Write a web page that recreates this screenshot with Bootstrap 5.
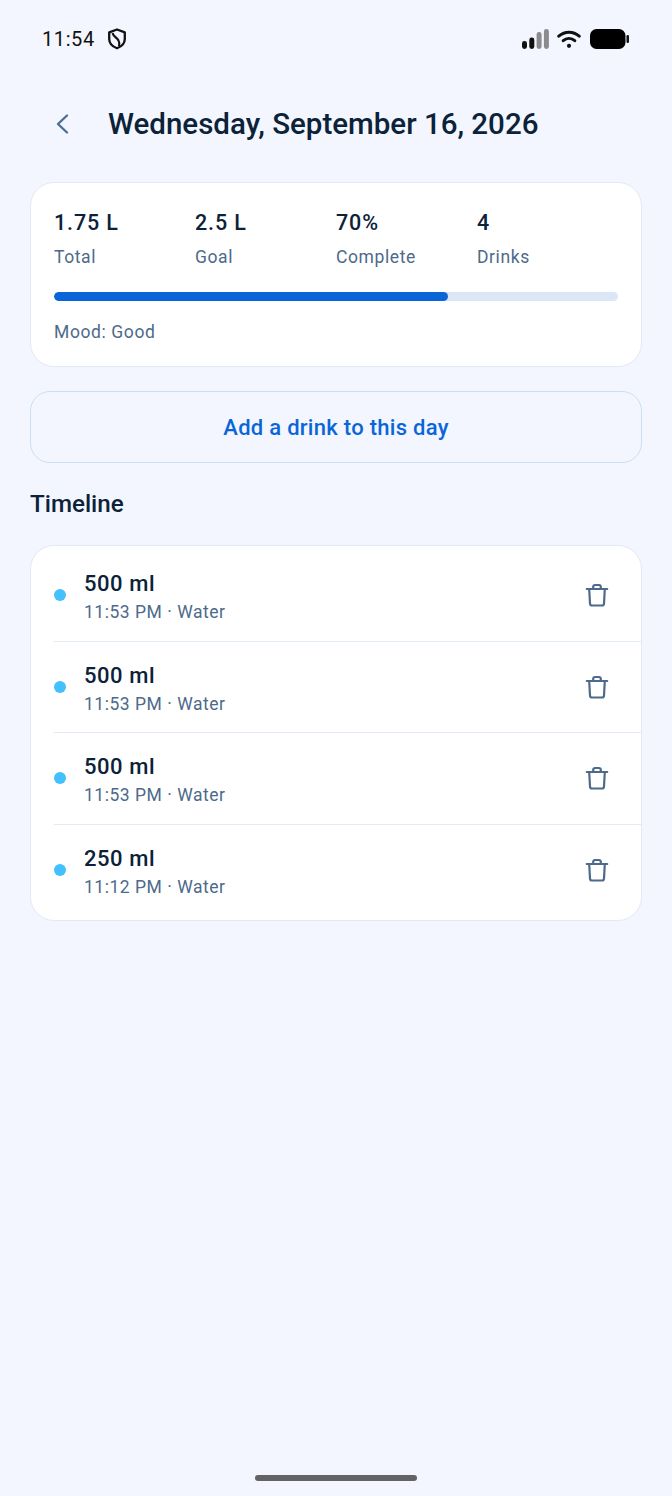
<!DOCTYPE html>
<html lang="en">
<head>
<meta charset="utf-8">
<title>Day detail</title>
<link href="https://cdn.jsdelivr.net/npm/bootstrap@5.3.0/dist/css/bootstrap.min.css" rel="stylesheet">
<style>
html,body{margin:0;background:#f3f6fe;}
body{font-family:Roboto,"Liberation Sans",sans-serif;color:#0b2239;}
.screen{height:1496px;width:672px;overflow:hidden;position:relative;background:#f3f6fe;}
.statusbar{height:78px;padding:0 42px 0 42px;}
.statusbar .clock{font-size:20px;line-height:24px;color:#111;letter-spacing:.6px;margin-right:12px;}
.headbar{height:56px;margin-top:18px;padding-left:52px;gap:32px;margin-bottom:30px;}
.headbar h1{font-size:29.5px;font-weight:500;letter-spacing:0;margin:0;color:#0b2239;line-height:36px;}
.backbtn{width:24px;height:24px;padding:0;border:0;background:none;line-height:0;}
.panel{background:#fff;border:1px solid #e2eaf6;border-radius:24px;margin:0 30px;}
.summary{padding:24px 23px 0;height:185px;}
.stat-col{width:141px;flex:none;}
.stat-val{font-size:21.5px;font-weight:480;line-height:32px;letter-spacing:.85px;color:#0b2239;}
.stat-lab{font-size:17.5px;line-height:24px;letter-spacing:.6px;color:#4d6a8a;margin-top:6px;}
.meter{height:9px;background:#dbe6f6;border-radius:5px;margin-top:23px;}
.meter .progress-bar{background:#0a66d8;border-radius:5px;}
.moodline{font-size:17.5px;line-height:24px;letter-spacing:.6px;color:#4d6a8a;margin-top:19px;}
.addbtn{display:block;width:calc(100% - 60px);margin:24px 30px 0;height:72px;border:1px solid #cbdff3;border-radius:20px;background:transparent;color:#0a66d8;font-size:22px;font-weight:500;letter-spacing:.28px;}
.addbtn:hover{background:transparent;color:#0a66d8;border-color:#cbdff3;}
.secthead{font-size:24.2px;font-weight:500;line-height:32px;margin:25px 30px 25px;color:#0b2239;}
.entries{padding:4px 0;height:376px;}
.entry{margin-left:23px;height:91.5px;border-bottom:1px solid #e2eaf6;padding-right:32px;}
.entry:last-child{border-bottom:0;}
.dot-mark{width:12px;height:12px;border-radius:50%;background:#45c0ff;flex:none;margin-right:18px;}
.entry-text{padding-top:4px;}
.entry-amt{font-size:22px;font-weight:480;line-height:28px;letter-spacing:.55px;color:#0b2239;}
.entry-sub{font-size:17.5px;line-height:24px;letter-spacing:.52px;color:#4d6a8a;margin-top:2px;}
.trashbtn{width:24px;height:24px;padding:0;border:0;background:none;line-height:0;}
.homebar{position:absolute;left:255px;top:1475px;width:162px;height:6px;border-radius:3px;background:#636367;}
</style>
</head>
<body>
<div class="screen">
  <div class="statusbar d-flex align-items-center">
    <span class="clock">11:54</span>
    <svg width="20" height="22" viewBox="0 0 20 22" fill="none" stroke="#111" stroke-width="2.300" stroke-linejoin="round"><path d="M10 1.500l7.800 2.800v6.700c0 4.400-3 7.400-7.800 9.300C5.200 18.400 2.200 15.400 2.200 11V4.300z"/><path d="M5.500 5c.8 3.500 4.500 4.500 6 7.500 1 1.700 1 3.500.5 5.500" stroke-width="2.100"/></svg>
    <div class="ms-auto d-flex align-items-center">
      <svg width="27" height="20" viewBox="0 0 27 20" style="margin-right:8px"><rect x="0" y="12" width="5" height="8" rx="2.400" fill="#111"/><rect x="7.300" y="8.500" width="5" height="11.500" rx="2.400" fill="#111"/><rect x="14.600" y="3" width="5" height="17" rx="2.400" fill="#8b8b8f"/><rect x="21.900" y="0" width="5" height="20" rx="2.400" fill="#8b8b8f"/></svg>
      <svg width="24" height="18" viewBox="0 0 24 18" fill="none" stroke="#111" stroke-width="3" stroke-linecap="round" style="margin-right:9px"><path d="M1.800 6.200c6-5.400 14.400-5.400 20.400 0"/><path d="M6.200 10.700c3.400-2.900 8.200-2.900 11.600 0"/><circle cx="12" cy="15.800" r="2.100" fill="#111" stroke="none"/></svg>
      <svg width="39" height="20" viewBox="0 0 39 20" style="margin-right:1px"><rect x="0" y="0" width="35.500" height="20" rx="6.500" fill="#000"/><rect x="36.500" y="6" width="2.500" height="8" rx="1.200" fill="#111"/></svg>
    </div>
  </div>

  <div class="headbar d-flex align-items-center">
    <button class="backbtn" type="button" aria-label="Back"><svg width="24" height="24" viewBox="0 0 24 24" fill="none" stroke="#4d6f96" stroke-width="2.400" stroke-linecap="round" stroke-linejoin="round"><path d="M15 3.500 L6 12 L15 20.500"/></svg></button>
    <h1>Wednesday, September 16, 2026</h1>
  </div>

  <div class="panel summary">
    <div class="d-flex">
      <div class="stat-col"><div class="stat-val">1.75 L</div><div class="stat-lab">Total</div></div>
      <div class="stat-col"><div class="stat-val">2.5 L</div><div class="stat-lab">Goal</div></div>
      <div class="stat-col"><div class="stat-val">70%</div><div class="stat-lab">Complete</div></div>
      <div class="stat-col"><div class="stat-val">4</div><div class="stat-lab">Drinks</div></div>
    </div>
    <div class="progress meter"><div class="progress-bar" style="width:69.8%"></div></div>
    <div class="moodline">Mood: Good</div>
  </div>

  <button type="button" class="btn addbtn">Add a drink to this day</button>

  <div class="secthead">Timeline</div>

  <div class="panel entries">
    <div class="entry d-flex align-items-center">
      <span class="dot-mark"></span>
      <div class="flex-grow-1 entry-text"><div class="entry-amt">500 ml</div><div class="entry-sub">11:53 PM · Water</div></div>
      <button class="trashbtn" type="button" aria-label="Delete"><svg width="24" height="24" viewBox="0 0 24 24" fill="none" stroke="#4d6a8a" stroke-width="2.200" stroke-linecap="round" stroke-linejoin="round"><path d="M1.800 6h20.400M4.200 6l.8 14.500a2 2 0 0 0 2 2h10a2 2 0 0 0 2-2l.8-14.500M8.200 6V4a2 2 0 0 1 2-2h3.600a2 2 0 0 1 2 2v2"/></svg></button>
    </div>
    <div class="entry d-flex align-items-center">
      <span class="dot-mark"></span>
      <div class="flex-grow-1 entry-text"><div class="entry-amt">500 ml</div><div class="entry-sub">11:53 PM · Water</div></div>
      <button class="trashbtn" type="button" aria-label="Delete"><svg width="24" height="24" viewBox="0 0 24 24" fill="none" stroke="#4d6a8a" stroke-width="2.200" stroke-linecap="round" stroke-linejoin="round"><path d="M1.800 6h20.400M4.200 6l.8 14.500a2 2 0 0 0 2 2h10a2 2 0 0 0 2-2l.8-14.500M8.200 6V4a2 2 0 0 1 2-2h3.600a2 2 0 0 1 2 2v2"/></svg></button>
    </div>
    <div class="entry d-flex align-items-center">
      <span class="dot-mark"></span>
      <div class="flex-grow-1 entry-text"><div class="entry-amt">500 ml</div><div class="entry-sub">11:53 PM · Water</div></div>
      <button class="trashbtn" type="button" aria-label="Delete"><svg width="24" height="24" viewBox="0 0 24 24" fill="none" stroke="#4d6a8a" stroke-width="2.200" stroke-linecap="round" stroke-linejoin="round"><path d="M1.800 6h20.400M4.200 6l.8 14.500a2 2 0 0 0 2 2h10a2 2 0 0 0 2-2l.8-14.500M8.200 6V4a2 2 0 0 1 2-2h3.600a2 2 0 0 1 2 2v2"/></svg></button>
    </div>
    <div class="entry d-flex align-items-center">
      <span class="dot-mark"></span>
      <div class="flex-grow-1 entry-text"><div class="entry-amt">250 ml</div><div class="entry-sub">11:12 PM · Water</div></div>
      <button class="trashbtn" type="button" aria-label="Delete"><svg width="24" height="24" viewBox="0 0 24 24" fill="none" stroke="#4d6a8a" stroke-width="2.200" stroke-linecap="round" stroke-linejoin="round"><path d="M1.800 6h20.400M4.200 6l.8 14.500a2 2 0 0 0 2 2h10a2 2 0 0 0 2-2l.8-14.500M8.200 6V4a2 2 0 0 1 2-2h3.600a2 2 0 0 1 2 2v2"/></svg></button>
    </div>
  </div>
  <div class="homebar"></div>
</div>
<script src="https://cdn.jsdelivr.net/npm/bootstrap@5.3.0/dist/js/bootstrap.bundle.min.js"></script>
</body>
</html>
